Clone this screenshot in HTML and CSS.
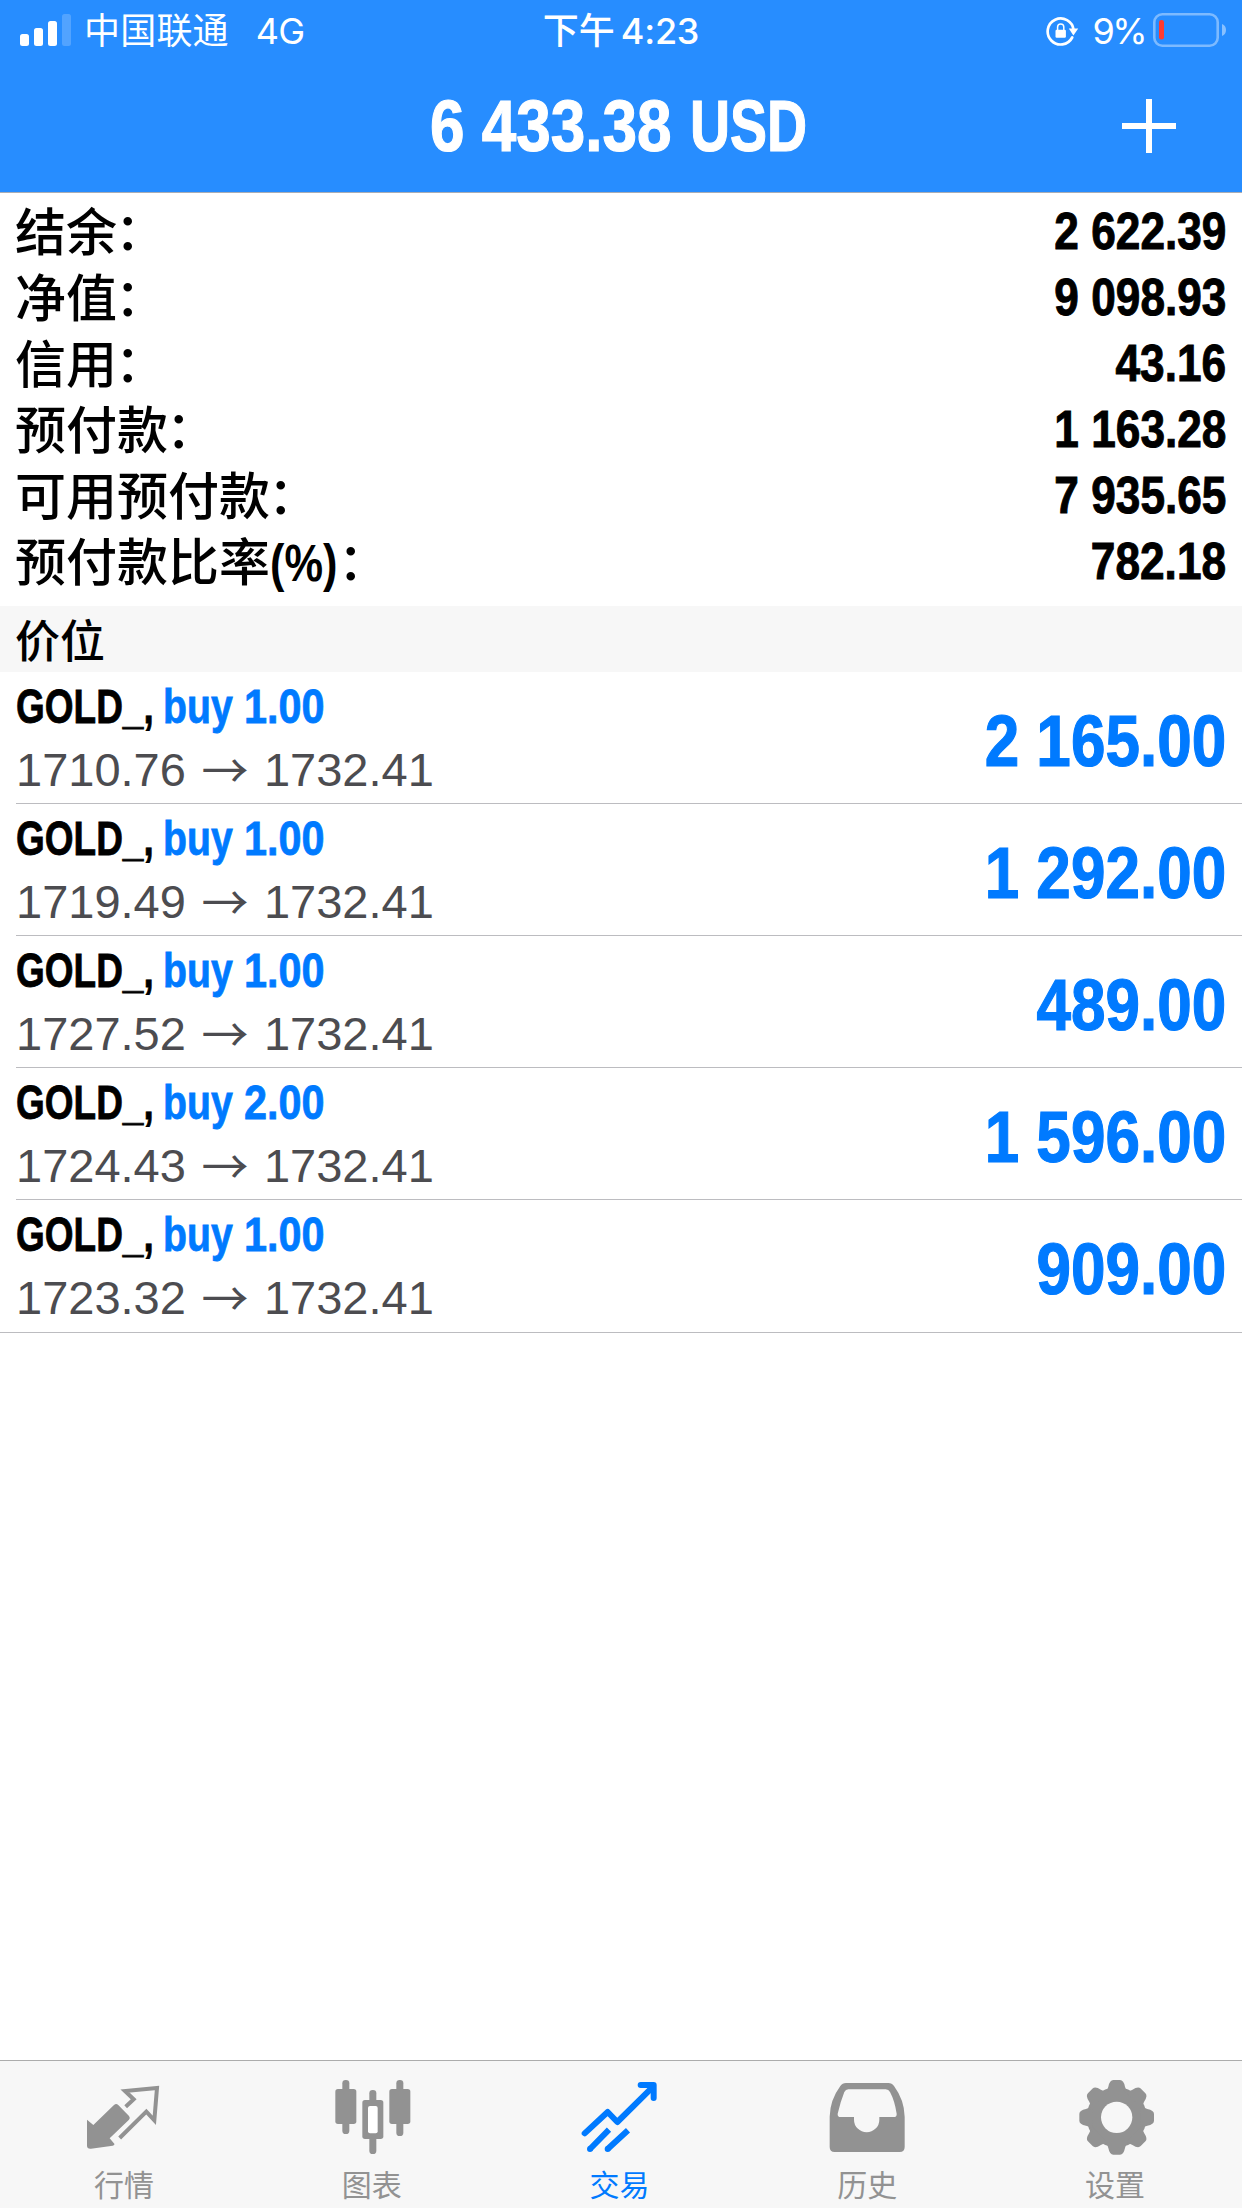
FILE: index.html
```html
<!DOCTYPE html>
<html lang="zh-CN">

<head>
    <meta charset="UTF-8">
    <meta name="viewport" content="width=device-width, initial-scale=1.0">
    <title>交易</title>
    <link rel="stylesheet" href="styles.css">
</head>

<body>
    <div class="app">
        <header class="header">
            <div class="status">
                <div class="status-left">
                    <svg class="signal" viewBox="0 0 51 32" fill="#fff">
                        <rect x="0" y="20" width="9" height="12" rx="2.5" />
                        <rect x="14" y="14" width="9" height="18" rx="2.5" />
                        <rect x="28" y="7" width="9" height="25" rx="2.5" />
                        <rect x="42" y="0" width="9" height="32" rx="2.5" opacity=".2" />
                    </svg>
                    <span class="carrier">中国联通</span>
                    <span class="network">4G</span>
                </div>
                <div class="status-time"><span>下午</span><span class="clock">4:23</span></div>
                <div class="status-right">
                    <svg class="lock" viewBox="0 0 34 30">
                        <path d="M27.2 21.5A13 13 0 1 1 28.6 14" fill="none" stroke="#fff" stroke-width="2.7" stroke-linecap="round" />
                        <path d="M23.8 12.5h9.4l-4.8 7z" fill="#fff" />
                        <rect x="10.5" y="13.8" width="10.4" height="8" rx="1.2" fill="#fff" />
                        <path d="M12.6 14v-3a3.1 3.1 0 0 1 6.2 0v3" fill="none" stroke="#fff" stroke-width="1.5" />
                    </svg>
                    <span class="percent">9%</span>
                    <svg class="battery" viewBox="0 0 73 34">
                        <rect x="1.3" y="1.3" width="63.4" height="31.4" rx="8" fill="none" stroke="#fff" stroke-opacity=".4" stroke-width="2.6" />
                        <rect x="6" y="7" width="5" height="19.500" rx="2.3" fill="#ff3b30" />
                        <path d="M69 11q4 1.500 4 6t-4 6z" fill="#fff" fill-opacity=".45" />
                    </svg>
                </div>
            </div>
            <div class="nav">
                <h1 class="nav-title"><span class="nav-sum">6 433.38</span><span class="nav-unit">USD</span></h1>
                <svg class="plus" viewBox="0 0 54 54">
                    <path d="M27 0v54M0 27h54" stroke="#fff" stroke-width="6" />
                </svg>
            </div>
        </header>

        <!-- 账户 -->
        <div class="account">
            <div class="account-row"><span class="label">结余<span class="colon">：</span></span><span class="value">2 622.39</span></div>
            <div class="account-row"><span class="label">净值<span class="colon">：</span></span><span class="value">9 098.93</span></div>
            <div class="account-row"><span class="label">信用<span class="colon">：</span></span><span class="value">43.16</span></div>
            <div class="account-row"><span class="label">预付款<span class="colon">：</span></span><span class="value">1 163.28</span></div>
            <div class="account-row"><span class="label">可用预付款<span class="colon">：</span></span><span class="value">7 935.65</span></div>
            <div class="account-row"><span class="label">预付款比率<span class="ratio">(%)</span><span class="colon">：</span></span><span class="value">782.18</span></div>
        </div>

        <h2 class="section">价位</h2>

        <!-- 持仓 -->
        <ul class="orders">
            <li class="order">
                <div class="order-info">
                    <div class="order-name"><span class="symbol">GOLD_,</span><span class="side">buy</span><span class="lots">1.00</span></div>
                    <div class="order-price"><span>1710.76</span><span class="arrow">→</span><span>1732.41</span></div>
                </div>
                <div class="profit">2 165.00</div>
            </li>
            <li class="order">
                <div class="order-info">
                    <div class="order-name"><span class="symbol">GOLD_,</span><span class="side">buy</span><span class="lots">1.00</span></div>
                    <div class="order-price"><span>1719.49</span><span class="arrow">→</span><span>1732.41</span></div>
                </div>
                <div class="profit">1 292.00</div>
            </li>
            <li class="order">
                <div class="order-info">
                    <div class="order-name"><span class="symbol">GOLD_,</span><span class="side">buy</span><span class="lots">1.00</span></div>
                    <div class="order-price"><span>1727.52</span><span class="arrow">→</span><span>1732.41</span></div>
                </div>
                <div class="profit">489.00</div>
            </li>
            <li class="order">
                <div class="order-info">
                    <div class="order-name"><span class="symbol">GOLD_,</span><span class="side">buy</span><span class="lots">2.00</span></div>
                    <div class="order-price"><span>1724.43</span><span class="arrow">→</span><span>1732.41</span></div>
                </div>
                <div class="profit">1 596.00</div>
            </li>
            <li class="order">
                <div class="order-info">
                    <div class="order-name"><span class="symbol">GOLD_,</span><span class="side">buy</span><span class="lots">1.00</span></div>
                    <div class="order-price"><span>1723.32</span><span class="arrow">→</span><span>1732.41</span></div>
                </div>
                <div class="profit">909.00</div>
            </li>
        </ul>

        <nav class="tabbar">
            <a class="tab">
                <svg class="tab-icon" viewBox="102 84 240 240">
                    <path d="M111 209l19 16 62-60q6-6 12-1l33 34q5 6 0 11l-58 56 14 16q2 5-5 6l-65 9q-12 1-12-9z" fill="currentColor" />
                    <path d="M227 170l24-22-26-25 96-9-8 97-24-26-80 79" fill="none" stroke="currentColor" stroke-width="12" />
                </svg>
                <span>行情</span>
            </a>
            <a class="tab">
                <svg class="tab-icon" viewBox="845 84 240 240" fill="currentColor">
                    <rect x="876" y="90" width="21" height="162" rx="10" />
                    <rect x="855" y="117" width="63" height="105" rx="8" />
                    <rect x="957" y="120" width="21" height="192" rx="10" />
                    <rect x="936" y="150" width="63" height="117" rx="8" />
                    <rect x="953" y="168" width="29" height="82" rx="6" fill="#fff" />
                    <rect x="1038" y="90" width="21" height="168" rx="10" />
                    <rect x="1017" y="117" width="63" height="105" rx="8" />
                </svg>
                <span>图表</span>
            </a>
            <a class="tab active">
                <svg class="tab-icon" viewBox="88 84 240 240" fill="none" stroke="currentColor" stroke-width="18">
                    <path d="M105 250l69-64 29 30 105-104" stroke-linecap="round" stroke-linejoin="round" />
                    <path d="M273 105h39v39" stroke-linecap="round" stroke-linejoin="round" />
                    <path d="M293 105h19v19z" fill="currentColor" stroke-width="6" />
                    <path d="M178 239l-57 58M235 241l-61 56" />
                    <path d="M121 297h.1M174 297h.1" stroke-linecap="round" />
                </svg>
                <span>交易</span>
            </a>
            <a class="tab">
                <svg class="tab-icon" viewBox="832 84 240 240">
                    <path d="M840 200q1-50 32-92 6-9 17-9h127q11 0 17 9 31 42 32 92v91q0 15-15 15H855q-15 0-15-15z" fill="currentColor" />
                    <path d="M896 118h112q9 0 13 8 14 26 20 65 1 10-9 10h-43v8a38 38 0 0 1-76 0v-8h-40q-10 0-9-10 8-35 20-65 4-8 12-8z" fill="#f7f7f7" />
                </svg>
                <span>历史</span>
            </a>
            <a class="tab">
                <svg class="tab-icon" viewBox="105 84 240 240" fill="currentColor">
                    <defs>
                        <path id="tooth" d="M188 130q13-4 17-20 4-20 15-20h20q11 0 15 20 4 16 17 20z" />
                    </defs>
                    <circle cx="230" cy="202" r="90" />
                    <use href="#tooth" />
                    <use href="#tooth" transform="rotate(45 230 202)" />
                    <use href="#tooth" transform="rotate(90 230 202)" />
                    <use href="#tooth" transform="rotate(135 230 202)" />
                    <use href="#tooth" transform="rotate(180 230 202)" />
                    <use href="#tooth" transform="rotate(225 230 202)" />
                    <use href="#tooth" transform="rotate(270 230 202)" />
                    <use href="#tooth" transform="rotate(315 230 202)" />
                    <circle cx="230" cy="202" r="47" fill="#f7f7f7" />
                </svg>
                <span>设置</span>
            </a>
        </nav>
    </div>
</body>

</html>
```
FILE: styles.css
```css
* {
    box-sizing: border-box;
    margin: 0;
    padding: 0;
}

body {
    font-family: "Liberation Sans", "Noto Sans CJK SC", sans-serif;
    color: #000;
    background: #fff;
}

.app {
    display: flex;
    flex-direction: column;
    width: 1242px;
    height: 2208px;
    overflow: hidden;
}

.header {
    height: 193px;
    color: #fff;
    background: #278dff;
    border-bottom: 1px solid #a9adb5;
}

/* 状态栏 */
.status {
    display: grid;
    grid-template-columns: 1fr auto 1fr;
    align-items: center;
    height: 60px;
    padding: 0 16px 0 20px;
    font-family: Inter, "Noto Sans CJK SC", sans-serif;
    font-size: 36px;
    line-height: 60px;
}

.status-left,
.status-time,
.status-right {
    display: flex;
    align-items: center;
    white-space: nowrap;
}

.status span {
    padding-top: 2px;
    line-height: 58px;
}

.signal {
    width: 51px;
    height: 32px;
}

.carrier {
    margin-left: 13px;
    font-weight: 400;
    letter-spacing: .2px;
}

.network {
    margin-left: 27px;
    letter-spacing: -.8px;
}

.status-time {
    padding-right: 4px;
    font-weight: 500;
}

.clock {
    margin-left: 6px;
    letter-spacing: -.2px;
}

.status-right {
    justify-content: flex-end;
}

.lock {
    width: 34px;
    height: 30px;
    margin-top: 2px;
}

.percent {
    margin: 0 8px 0 14px;
    letter-spacing: -2.6px;
}

.battery {
    width: 73px;
    height: 34px;
}

/* 标题 */
.nav {
    display: grid;
    grid-template-columns: 1fr auto 1fr;
    align-items: center;
    height: 132px;
    padding-right: 66px;
}

.nav-title {
    display: flex;
    grid-column: 2;
    width: 378px;
    margin-left: 61px;
    font-size: 73px;
    line-height: 130px;
    white-space: nowrap;
    -webkit-text-stroke: 1.2px;
}

/* 窄体数字 */
.nav-sum,
.nav-unit,
.value,
.profit,
.symbol,
.side,
.lots,
.ratio {
    display: inline-block;
    transform-origin: 0 50%;
    white-space: nowrap;
}

.nav-sum {
    width: 260px;
    transform: scaleX(.85);
}

.nav-unit {
    width: 118px;
    transform: scaleX(.76);
}

.plus {
    justify-self: end;
    width: 54px;
    height: 54px;
    margin-bottom: 1px;
}

/* 账户 */
.account {
    height: 413px;
    padding: 4px 16px 0 15px;
}

.account-row {
    display: flex;
    justify-content: space-between;
    height: 66px;
    line-height: 66px;
}

.label {
    font-family: "Noto Sans CJK SC", sans-serif;
    font-size: 51px;
    font-weight: 500;
    line-height: 64px;
}

.colon {
    display: inline-block;
    line-height: 1;
    transform: translate(-2px, -1px);
}

.ratio {
    width: 70px;
    font-family: "Liberation Sans", sans-serif;
    font-weight: 700;
    line-height: 1;
    transform: scaleX(.85);
}

.value {
    font-size: 52px;
    font-weight: 700;
    line-height: 68px;
    transform: scaleX(.85);
    transform-origin: 100% 50%;
    -webkit-text-stroke: 1px;
}

.section {
    height: 66px;
    padding-left: 15px;
    font-family: "Noto Sans CJK SC", sans-serif;
    font-size: 45px;
    font-weight: 500;
    line-height: 65px;
    background: #f7f7f7;
}

/* 持仓 */
.orders {
    flex: 1;
    padding-left: 16px;
    list-style: none;
}

.order {
    display: flex;
    justify-content: space-between;
    height: 132px;
    padding: 3px 16px 0 0;
    border-bottom: 1px solid #bcbcc0;
}

.order:last-child {
    height: 133px;
    margin-left: -16px;
    padding-left: 16px;
}

.order-name {
    display: flex;
    height: 63px;
    font-size: 49px;
    font-weight: 700;
    line-height: 63px;
    -webkit-text-stroke: .8px;
}

.symbol {
    width: 147px;
    transform: scaleX(.755);
}

.side,
.lots,
.profit {
    color: #007aff;
}

.side {
    width: 81px;
    transform: scaleX(.8);
}

.lots {
    transform: scaleX(.845);
}

.order-price {
    display: flex;
    height: 63px;
    font-size: 47px;
    line-height: 63px;
    color: #4c4c50;
}

.arrow {
    width: 78px;
    font-family: "Noto Sans CJK SC", sans-serif;
    font-weight: 400;
    line-height: 59px;
    text-align: center;
}

.profit {
    font-size: 73px;
    font-weight: 700;
    line-height: 132px;
    transform: scaleX(.85);
    transform-origin: 100% 50%;
    -webkit-text-stroke: 1.2px;
}

/* 底部标签 */
.tabbar {
    display: flex;
    height: 148px;
    padding-right: 3px;
    background: #f7f7f7;
    border-top: 1px solid #acacac;
}

.tab {
    display: flex;
    flex: 1;
    flex-direction: column;
    align-items: center;
    padding-top: 17px;
    font-family: "Noto Sans CJK SC", sans-serif;
    font-size: 30px;
    line-height: 30px;
    color: #929292;
}

.tab-icon {
    width: 80px;
    height: 80px;
    margin-bottom: 10px;
}

.tab.active {
    color: #007aff;
}
```
